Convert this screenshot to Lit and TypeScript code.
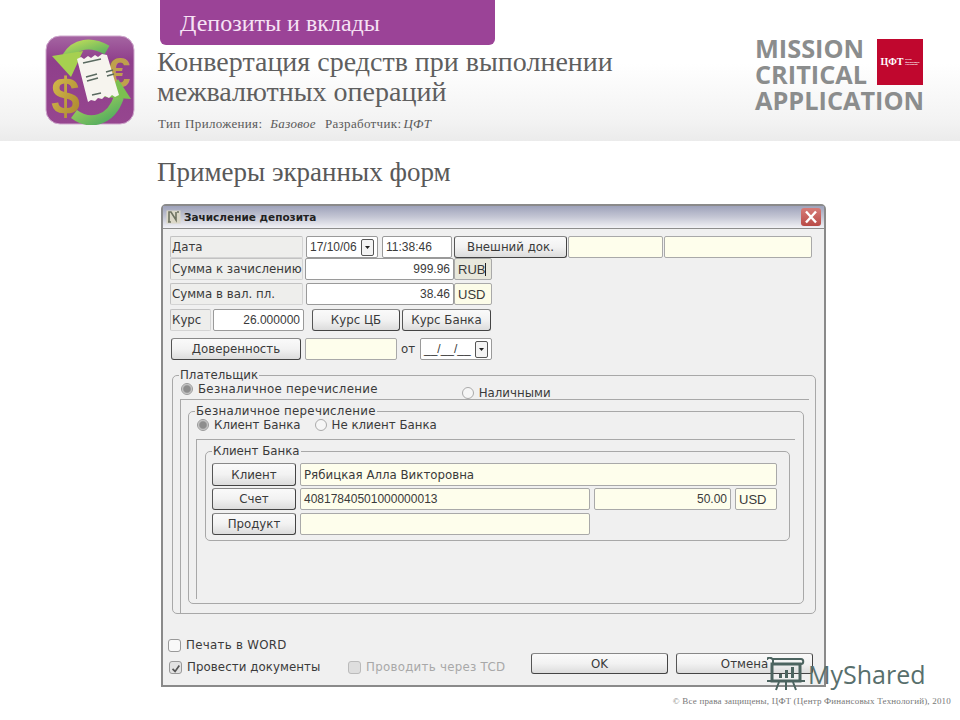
import { LitElement, html, css, svg } from "lit";
import { customElement } from "lit/decorators.js";

const appIcon = svg`
<svg class="appicon" viewBox="0 0 90 90" width="90" height="90">
  <defs>
    <linearGradient id="pg" x1="0" y1="0" x2="0" y2="1">
      <stop offset="0" stop-color="#a565a2"/><stop offset=".28" stop-color="#8f3f8b"/><stop offset="1" stop-color="#96468f"/>
    </linearGradient>
    <linearGradient id="gold" x1="0" y1="0" x2="1" y2="1">
      <stop offset="0" stop-color="#d8c050"/><stop offset="1" stop-color="#a8822c"/>
    </linearGradient>
    <linearGradient id="gr" x1="0" y1="0" x2="1" y2="1">
      <stop offset="0" stop-color="#b4d85a"/><stop offset="1" stop-color="#4aa860"/>
    </linearGradient>
  </defs>
  <rect x="1" y="1" width="88" height="88" rx="14" fill="url(#pg)" stroke="#cfa8cd"/>
  <text x="62" y="52" font-family="Liberation Sans" font-weight="700" font-size="42" fill="#bfa04c">€</text>
  <path d="M62 15C46 6 30 8 22 22" fill="none" stroke="url(#gr)" stroke-width="10"/>
  <path d="M7 21L38 16L26 42Z" fill="#a6d050"/>
  <text x="6" y="79" font-family="Liberation Sans" font-weight="700" font-size="52" fill="url(#gold)">$</text>
  <path d="M29 79C45 91 66 86 74 62" fill="none" stroke="url(#gr)" stroke-width="10"/>
  <path d="M59 62L73 44L86 64Z" fill="#7cc050"/>
  <path d="M32 24l4-2 3 2 4-3 3 2 4-3 3 2 4-3 5 1 12 40-4 2-3-2-3 3-4-2-3 3-4-1-3 3-4-1-3 2Z" fill="#f6f4ee"/>
  <path d="M38 28l18-4M41 42l11-3M42 46l11-3M61 37l7-2M62 41l7-2M47 60l9-2" stroke="#5a6a60" stroke-width="1.4"/>
</svg>`;

const winIcon = svg`
<svg class="winicon" viewBox="0 0 15 14" width="15" height="14">
  <rect x="0.5" y="0.5" width="14" height="13" fill="#dcd8c8"/>
  <path d="M3 12V2h2l5 8V2M11 2h2M2 12h3" fill="none" stroke="#6e7260" stroke-width="1.6"/>
</svg>`;

const closeIcon = svg`
<svg viewBox="0 0 20 18" width="20" height="18">
  <path d="M5 3.5l10 11M15 3.5l-10 11" stroke="#fff" stroke-width="2.4"/>
</svg>`;

const drop = html`<span class="drop"><svg viewBox="0 0 7 5" width="7" height="5"><path d="M1 1h5L3.5 4Z" fill="#222"/></svg></span>`;

const check = svg`<svg viewBox="0 0 13 13" width="13" height="13"><path d="M3 7l3 3 5-7" fill="none" stroke="#555" stroke-width="2"/></svg>`;

const watermark = svg`
<svg viewBox="0 0 38 34" width="38" height="34">
  <path d="M5 7h28v17H5Z" fill="none" stroke="#4c6460" stroke-width="3"/>
  <path d="M0 3c0-3 5-3 6 0v5M6 2h28c3 0 3 5 0 5M0 24h38" fill="none" stroke="#4c6460" stroke-width="2"/>
  <path d="M12 17h3v4h-3ZM18 13h3v8h-3ZM24 10h3v11h-3Z" fill="#4c6460"/>
  <path d="M12 25l-3 8M19 25v8M26 25l3 8" stroke="#4c6460" stroke-width="2"/>
</svg>`;

@customElement("app-root")
export class AppRoot extends LitElement {
  static styles = css`
    :host { display: block; position: relative; width: 960px; height: 720px; overflow: hidden; background: #fff; font-family: "Liberation Serif", serif; }
    .header { display: flex; height: 141px; padding-left: 45px; box-sizing: border-box; background: linear-gradient(#fff 0, #fff 45%, #f3f3f3 85%, #ebebeb 100%); }
    .appicon { margin-top: 35px; flex: none; }
    .head-col { margin-left: 22px; display: flex; flex-direction: column; }
    .tab { margin-left: 3px; width: 335px; height: 45px; box-sizing: border-box; padding: 9px 0 0 20px; background: #9b4397; border-radius: 0 0 6px 6px; color: #f6e2f4; font-size: 24px; line-height: 28px; }
    h1 { margin: 2px 0 0; font-weight: 400; font-size: 28px; line-height: 30px; color: #5f5f5f; }
    .meta { margin-top: 10px; margin-left: 1px; font-size: 13px; line-height: 14px; color: #5a5a5a; word-spacing: 1px; letter-spacing: .33px; }
    .meta i { margin: 0 9px 0 8px; }
    .meta i:last-child { margin: 0 0 0 2px; }
    .logo { margin-left: auto; margin-right: 37px; margin-top: 35px; font-family: "Open Sans", sans-serif; font-weight: 700; font-size: 25.3px; line-height: 26px; color: #8b8d8d; width: 168px; white-space: nowrap; }
    .logo-top { display: flex; justify-content: space-between; }
    .red { width: 46px; height: 46px; margin-top: 4px; background: #c0072e; color: #fff; display: flex; align-items: center; justify-content: center; gap: 2px; font-family: "Liberation Serif", serif; font-size: 10px; line-height: 1; }
    .red small { font-size: 2.2px; line-height: 2.6px; font-family: "Liberation Sans", sans-serif; }
    h2 { margin: 16px 0 0 157px; font-weight: 400; font-size: 27px; line-height: 30px; color: #595959; height: 47px; }

    .win { margin-left: 161px; width: 665px; height: 483px; box-sizing: border-box; border: 2px solid #8a8a8a; border-radius: 5px 5px 0 0; background: #f0f0f0; font-family: "DejaVu Sans", sans-serif; font-size: 11.8px; color: #3a3a3a; }
    .titlebar { height: 22px; display: flex; align-items: center; padding: 0 3px 0 3px; background: linear-gradient(#9ea2ba, #c4c6d4 50%, #f2f2f6); border-bottom: 1px solid #8d8d8d; font-weight: 700; font-size: 10.5px; color: #222; }
    .winicon { margin-right: 3px; }
    .close { margin-left: auto; width: 20px; height: 18px; border-radius: 3px; background: linear-gradient(#d77c78, #b84a46); display: flex; }
    .content { padding: 7px 0 0 7px; }
    .row { display: grid; height: 22px; }
    .r1 { grid-template-columns: 133px 75px 74px 115px 96px 149px; }
    .r2 { grid-template-columns: 133px 151px 38px; }
    .r3 { grid-template-columns: 133px 151px 38px; margin-top: 3px; }
    .r4 { grid-template-columns: 41px 93px 96px 91px; margin-top: 4px; }
    .r5 { grid-template-columns: 130px 96px 20px 75px; margin: 7px 0 0 1px; }
    .ml1 { margin-left: 1px; } .ml2 { margin-left: 2px; } .ml3 { margin-left: 3px; } .ml4 { margin-left: 4px; } .ml8 { margin-left: 8px; }
    .f { display: flex; align-items: center; box-sizing: border-box; padding: 0 3px; min-width: 0; white-space: nowrap; border: 1px solid #a9a9a9; border-radius: 2px; }
    .lab { background: #eeeeec; border: 1px solid #d4d4d4; padding: 0 1px; border-top-color: #c2c2c2; border-left-color: #c2c2c2; }
    .in { background: #fff; border-color: #9a9a9a; }
    .y { background: #fefeec; }
    .num { font-family: "Liberation Sans", sans-serif; font-size: 12px; }
    .cur { font-family: "Liberation Sans", sans-serif; font-size: 13px; }
    .right { justify-content: flex-end; }
    .rub { background: #e8e8dc; }
    .usd { background: #fcfce8; }
    .btn { display: flex; align-items: center; justify-content: center; box-sizing: border-box; white-space: nowrap; border: 1px solid #c4c4c4; border-right-color: #444; border-bottom-color: #444; border-left-color: #555; border-top-color: #888; border-radius: 3px; background: linear-gradient(#fafafa, #f2f2f2 50%, #dcdcdc); }
    .cursor { border-right: 1px solid #222; height: 13px; }
    .drop { margin-left: auto; width: 13px; height: 17px; box-sizing: border-box; border: 1px solid #555; background: #f4f4f4; border-radius: 2px; display: flex; align-items: center; justify-content: center; }
    .ot { padding-left: 4px; display: flex; align-items: center; }

    .group { position: relative; box-sizing: border-box; border: 1px solid #a8a8a8; border-radius: 5px; }
    .legend { position: absolute; left: 6px; top: -8px; padding: 0 1px; background: #f0f0f0; line-height: 14px; white-space: nowrap; }
    .wide { letter-spacing: .28px; }
    .g1 { margin: 15px 0 0 2px; width: 644px; height: 239px; padding: 6px 7px 0 7px; }
    .g2 { margin: 11px 0 0 7px; width: 616px; height: 193px; padding: 6px 8px 0 7px; }
    .g3 { margin: 11px 0 0 8px; width: 585px; height: 90px; padding: 11px 0 0 6px; }
    .panel { border-top: 1px solid #a8a8a8; border-left: 1px solid #a8a8a8; }
    .p1 { height: 214px; width: 628px; }
    .p2 { height: 159px; width: 598px; }
    .radios { display: flex; height: 21px; padding-left: 1px; }
    .rad1 { height: 17px; align-items: flex-start; }
    .opt { display: flex; align-items: center; gap: 5px; height: 13px; white-space: nowrap; }
    .opt2 { margin-left: 84px; margin-top: 4px; }
    .opt3 { margin-left: 14px; }
    .rd { width: 12px; height: 12px; box-sizing: border-box; border-radius: 50%; border: 1px solid #aaa; background: #f6f6f6; flex: none; }
    .rd.on { background: radial-gradient(circle, #8d8d8d 0, #8d8d8d 45%, #d8d8d8 70%); border-color: #999; }
    .r6 { grid-template-columns: 88px 477px; height: 23px; }
    .r7 { grid-template-columns: 88px 290px 141px 46px; height: 22px; margin-top: 2px; }
    .r8 { grid-template-columns: 88px 290px; height: 22px; margin-top: 3px; }
    .g3 .btn { margin-right: 4px; }
    .bottom { margin: 0 0 0 -2px; }
    .chk { display: flex; align-items: center; gap: 5px; white-space: nowrap; }
    .bx { width: 13px; height: 13px; box-sizing: border-box; border: 1px solid #999; border-radius: 3px; background: #f8f8f8; display: flex; flex: none; }
    .b1 { margin-top: 23px; height: 16px; letter-spacing: .3px; }
    .b2 { display: flex; align-items: center; height: 24px; margin-top: 2px; }
    .b2 .first { margin-left: 1px; width: 179px; letter-spacing: .07px; }
    .first .bx { background: #e2e2e2; }
    .dis { color: #a8a8a8; width: 183px; letter-spacing: .28px; }
    .dis .bx { background: #dedede; border-color: #bbb; }
    .okb { width: 137px; height: 21px; margin-top: -7px; }
    .okb + .okb { margin-left: 8px; }

    .foot { margin-top: 8px; padding-right: 9px; text-align: right; font-size: 9px; line-height: 12px; color: #777; letter-spacing: .19px; }
    .mark { position: absolute; left: 767px; top: 657px; display: flex; align-items: center; gap: 3px; font-family: "Open Sans", sans-serif; font-size: 25px; line-height: 34px; color: #586f6c; }
  `;

  render() {
    return html`
      <div class="header">
        ${appIcon}
        <div class="head-col">
          <div class="tab">Депозиты и вклады</div>
          <h1>Конвертация средств при выполнении<br />межвалютных операций</h1>
          <div class="meta">Тип Приложения:<i>Базовое</i>Разработчик:<i>ЦФТ</i></div>
        </div>
        <div class="logo">
          <div class="logo-top">
            <div>MISSION<br />CRITICAL</div>
            <div class="red"><span>ЦФТ</span><small>центр<br />финансовых<br />технологий</small></div>
          </div>
          <div>APPLICATION</div>
        </div>
      </div>
      <h2>Примеры экранных форм</h2>

      <div class="win">
        <div class="titlebar">${winIcon}<span>Зачисление депозита</span><span class="close">${closeIcon}</span></div>
        <div class="content">
          <div class="row r1">
            <div class="f lab">Дата</div>
            <div class="f in num ml3">17/10/06${drop}</div>
            <div class="f in num ml4">11:38:46</div>
            <div class="btn ml2">Внешний док.</div>
            <div class="f y ml1"></div>
            <div class="f y ml1"></div>
          </div>
          <div class="row r2">
            <div class="f lab">Сумма к зачислению</div>
            <div class="f in num right ml2">999.96</div>
            <div class="f rub cur">RUB<span class="cursor"></span></div>
          </div>
          <div class="row r3">
            <div class="f lab">Сумма в вал. пл.</div>
            <div class="f in num right ml3">38.46</div>
            <div class="f usd cur">USD</div>
          </div>
          <div class="row r4">
            <div class="f lab">Курс</div>
            <div class="f in num right ml2">26.000000</div>
            <div class="btn ml8">Курс ЦБ</div>
            <div class="btn ml2">Курс Банка</div>
          </div>
          <div class="row r5">
            <div class="btn">Доверенность</div>
            <div class="f y ml4"></div>
            <div class="ot">от</div>
            <div class="f in num ml3">__/__/__${drop}</div>
          </div>

          <div class="group g1">
            <span class="legend">Плательщик</span>
            <div class="radios rad1">
              <span class="opt wide"><span class="rd on"></span>Безналичное перечисление</span>
              <span class="opt opt2"><span class="rd"></span>Наличными</span>
            </div>
            <div class="panel p1">
              <div class="group g2">
                <span class="legend wide">Безналичное перечисление</span>
                <div class="radios">
                  <span class="opt"><span class="rd on"></span>Клиент Банка</span>
                  <span class="opt opt3"><span class="rd"></span>Не клиент Банка</span>
                </div>
                <div class="panel p2">
                  <div class="group g3">
                    <span class="legend">Клиент Банка</span>
                    <div class="row r6"><div class="btn">Клиент</div><div class="f y">Рябицкая Алла Викторовна</div></div>
                    <div class="row r7"><div class="btn">Счет</div><div class="f y num">40817840501000000013</div><div class="f y num right ml4">50.00</div><div class="f y cur ml4">USD</div></div>
                    <div class="row r8"><div class="btn">Продукт</div><div class="f y"></div></div>
                  </div>
                </div>
              </div>
            </div>
          </div>

          <div class="bottom">
            <div class="chk b1"><span class="bx"></span>Печать в WORD</div>
            <div class="b2">
              <div class="chk first"><span class="bx">${check}</span>Провести документы</div>
              <div class="chk dis"><span class="bx"></span>Проводить через TCD</div>
              <div class="btn okb">OK</div>
              <div class="btn okb">Отмена</div>
            </div>
          </div>
        </div>
      </div>
      <div class="foot">© Все права защищены, ЦФТ (Центр Финансовых Технологий), 2010</div>
      <div class="mark">${watermark}<span>MyShared</span></div>
    `;
  }
}
